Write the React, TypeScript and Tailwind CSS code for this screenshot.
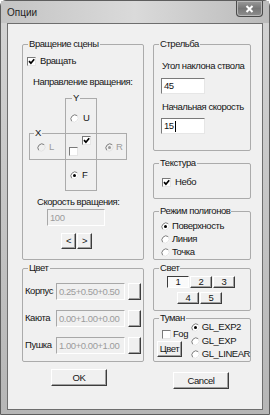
import React from 'react'

const Check = ({ checked, className = '' }: { checked?: boolean; className?: string }) => (
  <span
    className={`box-border block h-[9px] w-[9px] shrink-0 border border-t-[#7a7a7a] border-l-[#7a7a7a] border-r-[#e6e6e6] border-b-[#e6e6e6] bg-white ${className}`}
  >
    {checked && (
      <svg viewBox="0 0 7 7" className="block h-[7px] w-[7px]">
        <path d="M1 3.2 L2.9 5.2 L6.2 1.3" stroke="#000" strokeWidth="1.7" fill="none" />
      </svg>
    )}
  </span>
)

const Radio = ({ checked, disabled }: { checked?: boolean; disabled?: boolean }) => (
  <svg width="9" height="9" viewBox="0 0 9 9" className="block shrink-0">
    <circle cx="4.5" cy="4.5" r="4" fill={disabled ? '#f0f0f0' : '#fff'} />
    <path d="M1.7 7.3 A4 4 0 0 1 7.3 1.7" stroke="#7a7a7a" fill="none" />
    <path d="M7.3 1.7 A4 4 0 0 1 1.7 7.3" stroke="#e2e2e2" fill="none" />
    {checked && <circle cx="4.5" cy="4.5" r="1.5" fill={disabled ? '#9a9a9a' : '#000'} />}
  </svg>
)

const Group = ({
  title,
  className = '',
  children,
}: {
  title: string
  className?: string
  children?: React.ReactNode
}) => (
  <div className={`flex flex-col rounded-[2px] border border-[#ababab] ${className}`}>
    <span className="-mt-[7px] ml-[5px] h-[12px] w-fit bg-[#f0f0f0] px-[1px] leading-[12px]">{title}</span>
    {children}
  </div>
)

const Btn = ({ children, className = '' }: { children?: React.ReactNode; className?: string }) => (
  <div
    className={`flex shrink-0 items-center justify-center border border-t-white border-l-white border-r-[#3c3c3c] border-b-[#3c3c3c] bg-[#f0f0f0] leading-none shadow-[inset_-1px_-1px_0_#a0a0a0] ${className}`}
  >
    {children}
  </div>
)

const Field = ({ value, disabled, cursor, className = '' }: { value: string; disabled?: boolean; cursor?: boolean; className?: string }) => (
  <div
    className={`flex shrink-0 items-center border pl-[2px] leading-none ${
      disabled
        ? 'border-t-[#a8a8a8] border-l-[#a8a8a8] border-r-white border-b-white bg-[#f0f0f0] text-[#9c9c9c]'
        : 'border-t-[#7a7a7a] border-l-[#7a7a7a] border-r-[#e6e6e6] border-b-[#e6e6e6] bg-white'
    } ${className}`}
  >
    {value}
    {cursor && <span className="ml-[1px] h-[11px] w-[1px] bg-black" />}
  </div>
)

const RadioRow = ({ label, checked, disabled, className = '' }: { label: string; checked?: boolean; disabled?: boolean; className?: string }) => (
  <div className={`flex h-[12px] items-center gap-[2px] ${disabled ? 'text-[#9c9c9c]' : ''} ${className}`}>
    <Radio checked={checked} disabled={disabled} />
    <span>{label}</span>
  </div>
)

export default function App() {
  return (
    <div className="h-[415px] w-[270px] whitespace-nowrap font-['Liberation_Sans',Arial,sans-serif] text-[9.5px] tracking-[-0.45px] text-[#151515]">
      <div className="flex h-full w-full flex-col rounded-t-[6px] border border-[#5e5e5e] bg-linear-to-b from-[#d4d4d4] to-[#b6b6b6]">
        {/* title bar */}
        <div className="flex h-[22px] shrink-0 items-start justify-between bg-linear-to-r from-[#c4c4c4] via-[#dadada] to-[#bababa]">
          <span className="ml-[6px] mt-[6px] text-[10px] leading-[12px] tracking-normal text-[#1e1e1e]">Опции</span>
          <div className="mr-[6px] flex h-[16px] w-[27px] items-center justify-center rounded-b-[4px] border border-t-0 border-[#4a4a4a] bg-linear-to-b from-[#9a9a9a] via-[#767676] to-[#8e8e8e] shadow-[inset_0_0_0_1px_#b8b8b8]">
            <svg width="9" height="8" viewBox="0 0 9 8">
              <path d="M1.5 1 L7.5 7 M7.5 1 L1.5 7" stroke="#fff" strokeWidth="2" />
            </svg>
          </div>
        </div>

        {/* client area */}
        <div className="mx-[6px] mb-[4px] flex flex-1 gap-[9px] border border-[#6e6e6e] bg-[#f0f0f0] pl-[14px] pt-[20px]">
          {/* left column */}
          <div className="flex w-[122px] flex-col">
            <Group title="Вращение сцены" className="h-[216px]">
              <div className="ml-[4px] mt-[5px] flex h-[12px] items-center gap-[4px]">
                <Check checked />
                <span>Вращать</span>
              </div>
              <span className="ml-[10px] mt-[9px] leading-[12px]">Направление вращения:</span>

              <div className="ml-[6px] mt-[10px] grid grid-cols-[36px_32px_30px] grid-rows-[35px_27px_31px]">
                <div className="col-start-2 row-start-1 row-span-3 border border-[#ababab]">
                  <span className="-mt-[7px] ml-[6px] block h-[12px] w-fit bg-[#f0f0f0] px-[1px] leading-[12px]">Y</span>
                </div>
                <div className="col-start-1 col-span-3 row-start-2 border border-[#ababab]">
                  <span className="-mt-[7px] ml-[4px] block h-[12px] w-fit bg-[#f0f0f0] px-[1px] leading-[12px]">X</span>
                </div>
                <RadioRow label="U" className="col-start-2 row-start-1 mt-[14px] ml-[5px] gap-[4px] self-start" />
                <RadioRow label="L" disabled className="col-start-1 row-start-2 mt-[8px] ml-[8px] gap-[3px] self-start" />
                <div className="col-start-2 row-start-2 flex items-start">
                  <Check className="ml-[4px] mt-[14px]" />
                  <Check checked className="ml-[4px] mt-[3px]" />
                </div>
                <RadioRow label="R" checked disabled className="col-start-3 row-start-2 mt-[8px] ml-[8px] self-start" />
                <RadioRow label="F" checked className="col-start-2 row-start-3 mt-[9px] ml-[5px] gap-[3px] self-start" />
              </div>

              <span className="ml-[14px] mt-[5px] leading-[12px]">Скорость вращения:</span>
              <Field value="100" disabled className="ml-[24px] mt-[1px] h-[17px] w-[58px]" />
              <div className="ml-[38px] mt-[7px] flex gap-[1px]">
                <Btn className="h-[16px] w-[15px]">&lt;</Btn>
                <Btn className="h-[16px] w-[15px]">&gt;</Btn>
              </div>
            </Group>

            <Group title="Цвет" className="mt-[8px] h-[94px]">
              <div className="mt-[9px] flex flex-col gap-[10px]">
                {[
                  ['Корпус', '0.25+0.50+0.50'],
                  ['Каюта', '0.00+1.00+0.00'],
                  ['Пушка', '1.00+0.00+1.00'],
                ].map(([name, val]) => (
                  <div key={name} className="ml-[2px] flex h-[17px] items-center">
                    <span className="w-[31px]">{name}</span>
                    <Field value={val} disabled className="h-[17px] w-[69px]" />
                    <Btn className="ml-[3px] h-[17px] w-[13px]" />
                  </div>
                ))}
              </div>
            </Group>

            <Btn className="ml-[29px] mt-[7px] h-[17px] w-[56px]">OK</Btn>
          </div>

          {/* right column */}
          <div className="flex w-[98px] flex-col">
            <Group title="Стрельба" className="h-[107px]">
              <span className="ml-[8px] mt-[10px] leading-[12px]">Угол наклона ствола</span>
              <Field value="45" className="ml-[7px] mt-[6px] h-[16px] w-[44px]" />
              <span className="ml-[8px] mt-[7px] leading-[12px]">Начальная скорость</span>
              <Field value="15" cursor className="ml-[7px] mt-[5px] h-[16px] w-[44px]" />
            </Group>

            <Group title="Текстура" className="mt-[12px] h-[36px]">
              <div className="ml-[8px] mt-[7px] flex h-[12px] items-center gap-[4px]">
                <Check checked />
                <span>Небо</span>
              </div>
            </Group>

            <Group title="Режим полигонов" className="mt-[12px] h-[49px]">
              <div className="ml-[7px] mt-[3px] flex flex-col gap-[1px]">
                <RadioRow label="Поверхность" checked />
                <RadioRow label="Линия" />
                <RadioRow label="Точка" />
              </div>
            </Group>

            <Group title="Свет" className="mt-[8px] h-[43px]">
              <div className="ml-[13px] mt-[2px] flex gap-[1px]">
                <div className="flex h-[12px] w-[22px] items-center justify-center border border-t-[#3c3c3c] border-l-[#3c3c3c] border-r-white border-b-white bg-[#fafafa] leading-none">
                  1
                </div>
                <Btn className="h-[12px] w-[22px]">2</Btn>
                <Btn className="h-[12px] w-[22px]">3</Btn>
              </div>
              <div className="ml-[23px] mt-[4px] flex gap-[1px]">
                <Btn className="h-[12px] w-[22px]">4</Btn>
                <Btn className="h-[12px] w-[22px]">5</Btn>
              </div>
            </Group>

            <Group title="Туман" className="mt-[7px] h-[44px]">
              <div className="-mt-[3px] flex">
                <div className="flex w-[38px] flex-col">
                  <div className="ml-[8px] mt-[7px] flex h-[12px] items-center gap-[2px]">
                    <Check />
                    <span>Fog</span>
                  </div>
                  <Btn className="ml-[3px] mt-[1px] h-[16px] w-[25px]">Цвет</Btn>
                </div>
                <div className="flex flex-col gap-[1px]">
                  <RadioRow label="GL_EXP2" checked className="h-[13px]" />
                  <RadioRow label="GL_EXP" className="h-[12px]" />
                  <RadioRow label="GL_LINEAR" className="h-[13px]" />
                </div>
              </div>
            </Group>

            <Btn className="ml-[20px] mt-[10px] h-[17px] w-[56px]">Cancel</Btn>
          </div>
        </div>
      </div>
    </div>
  )
}
